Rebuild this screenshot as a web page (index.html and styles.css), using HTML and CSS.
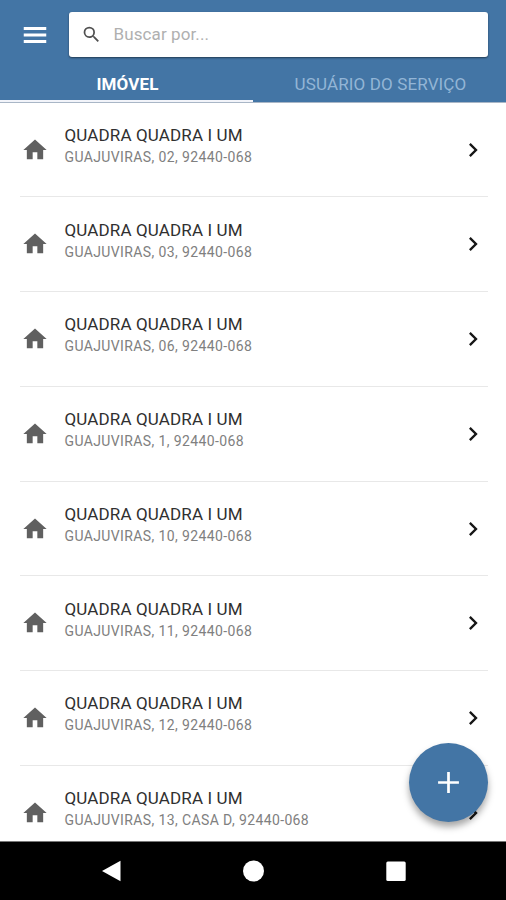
FILE: index.html
```html
<!DOCTYPE html>
<html lang="pt-BR">
<head>
<meta charset="utf-8">
<title>Imóveis</title>
<link rel="stylesheet" href="styles.css">
</head>
<body>
<svg class="defs" aria-hidden="true">
  <symbol id="home" viewBox="0 0 24 24"><path d="M10 20v-6h4v6h5v-8h3L12 3 2 12h3v8z"/></symbol>
  <symbol id="chevron" viewBox="0 0 24 24"><path d="M10 6 8.59 7.41 13.17 12l-4.58 4.59L10 18l6-6z"/></symbol>
</svg>
<div class="app">
  <header class="header">
    <div class="toolbar">
      <svg class="menu" viewBox="0 0 24 24"><path d="M3 18.400h18v-2.400H3zm0-5.200h18v-2.400H3zm0-7.600V8h18V5.600z"/></svg>
      <div class="search">
        <svg class="search-icon" viewBox="0 0 24 24"><path d="M15.5 14h-.79l-.28-.27A6.47 6.47 0 0 0 16 9.500 6.500 6.500 0 1 0 9.500 16c1.610 0 3.090-.59 4.230-1.570l.27.28v.79l5 4.990L20.490 19l-4.990-5zm-6 0a4.500 4.500 0 1 1 0-9 4.500 4.500 0 0 1 0 9z"/></svg>
        <span class="placeholder">Buscar por...</span>
      </div>
    </div>
    <nav class="tabs">
      <div class="tab active">IMÓVEL</div>
      <div class="tab">USUÁRIO DO SERVIÇO</div>
    </nav>
  </header>
  <main class="list">
    <div class="row"><svg class="home"><use href="#home"/></svg><div class="text"><div class="title">QUADRA QUADRA I UM</div><div class="sub">GUAJUVIRAS, 02, 92440-068</div></div><svg class="chevron"><use href="#chevron"/></svg></div>
    <div class="row"><svg class="home"><use href="#home"/></svg><div class="text"><div class="title">QUADRA QUADRA I UM</div><div class="sub">GUAJUVIRAS, 03, 92440-068</div></div><svg class="chevron"><use href="#chevron"/></svg></div>
    <div class="row"><svg class="home"><use href="#home"/></svg><div class="text"><div class="title">QUADRA QUADRA I UM</div><div class="sub">GUAJUVIRAS, 06, 92440-068</div></div><svg class="chevron"><use href="#chevron"/></svg></div>
    <div class="row"><svg class="home"><use href="#home"/></svg><div class="text"><div class="title">QUADRA QUADRA I UM</div><div class="sub">GUAJUVIRAS, 1, 92440-068</div></div><svg class="chevron"><use href="#chevron"/></svg></div>
    <div class="row"><svg class="home"><use href="#home"/></svg><div class="text"><div class="title">QUADRA QUADRA I UM</div><div class="sub">GUAJUVIRAS, 10, 92440-068</div></div><svg class="chevron"><use href="#chevron"/></svg></div>
    <div class="row"><svg class="home"><use href="#home"/></svg><div class="text"><div class="title">QUADRA QUADRA I UM</div><div class="sub">GUAJUVIRAS, 11, 92440-068</div></div><svg class="chevron"><use href="#chevron"/></svg></div>
    <div class="row"><svg class="home"><use href="#home"/></svg><div class="text"><div class="title">QUADRA QUADRA I UM</div><div class="sub">GUAJUVIRAS, 12, 92440-068</div></div><svg class="chevron"><use href="#chevron"/></svg></div>
    <div class="row"><svg class="home"><use href="#home"/></svg><div class="text"><div class="title">QUADRA QUADRA I UM</div><div class="sub">GUAJUVIRAS, 13, CASA D, 92440-068</div></div><svg class="chevron"><use href="#chevron"/></svg></div>
  </main>
  <button class="fab" aria-label="Adicionar"><svg viewBox="0 0 24 24"><path d="M10.700 2h2.600v8.700H22v2.600h-8.700V22h-2.600v-8.700H2v-2.600h8.700z"/></svg></button>
  <footer class="navbar">
    <svg viewBox="0 0 24 24"><path d="M2 12 20.500 1.800v20.400z"/></svg>
    <svg viewBox="0 0 24 24"><circle cx="11.500" cy="12" r="10.500"/></svg>
    <svg viewBox="0 0 24 24"><rect x="2.300" y="2.500" width="19.400" height="19.400" rx="1.500"/></svg>
  </footer>
</div>
</body>
</html>
```
FILE: styles.css
```css
* { box-sizing: border-box; }
body { margin: 0; font-family: Roboto, "Liberation Sans", sans-serif; background: #fff; }
svg { display: block; flex: none; fill: currentColor; }
.defs { display: none; }
.app {
  position: relative;
  display: flex;
  flex-direction: column;
  width: 506px;
  height: 900px;
  overflow: hidden;
}
.header {
  flex: none;
  height: 103px;
  display: flex;
  flex-direction: column;
  background: #4375a5;
  border-bottom: 1px solid #a9b6c6;
}
.toolbar { display: flex; align-items: center; height: 69px; padding: 0 18px 0 20px; }
.menu { width: 30px; height: 30px; color: #fff; }
.search {
  flex: 1;
  display: flex;
  align-items: center;
  height: 45px;
  margin-left: 19px;
  padding-left: 12px;
  border-radius: 3px;
  background: #fff;
  box-shadow: 0 1px 2px rgba(0, 0, 0, .5);
}
.search-icon { width: 21px; height: 21px; color: #505050; }
.placeholder { margin: 0 0 2px 11.5px; font-size: 17px; letter-spacing: .1px; color: #b0b0b0; }
.tabs { flex: 1; display: flex; }
.tab {
  flex: 1;
  display: flex;
  justify-content: center;
  padding: 4px 0 0 2px;
  font-size: 17px;
  line-height: 22px;
  letter-spacing: .13px;
  color: #93b5d6;
}
.active { color: #fff; font-weight: 700; border-bottom: 2px solid #f2f4fa; }
.list { flex: 1; min-height: 0; overflow: hidden; }
.row {
  display: flex;
  height: 94.75px;
  margin: 0 18px 0 20px;
  border-bottom: 1px solid #e8e8e8;
}
.row:first-child { height: 94.300px; }
.home { width: 28px; height: 28px; margin: 33.200px 0 0 1px; color: #606060; }
.row:first-child .home { margin-top: 32.800px; }
.text { flex: 1; margin: 21.400px 0 0 15.500px; white-space: nowrap; }
.title { font-size: 17px; line-height: 22px; letter-spacing: .13px; color: #303030; }
.sub { font-size: 14px; line-height: 22px; letter-spacing: .38px; color: #808080; }
.chevron { width: 28px; height: 28px; margin: 33px 1px 0 0; color: #161616; }
.row:first-child .chevron { margin-top: 32.500px; }
.fab {
  position: absolute;
  left: 409px;
  top: 743px;
  width: 79px;
  height: 79px;
  display: flex;
  align-items: center;
  justify-content: center;
  padding: 0;
  border: 0;
  border-radius: 50%;
  background: #4375a5;
  color: #fff;
  box-shadow: 0 5px 7px rgba(0, 0, 0, .35);
}
.fab svg { width: 25px; height: 25px; }
.navbar {
  flex: none;
  display: flex;
  align-items: center;
  justify-content: space-between;
  height: 59px;
  padding: 0 98px 0 100px;
  border-top: 1px solid #777;
  background: #000;
  color: #fff;
}
.navbar svg { width: 24px; height: 24px; }
```
